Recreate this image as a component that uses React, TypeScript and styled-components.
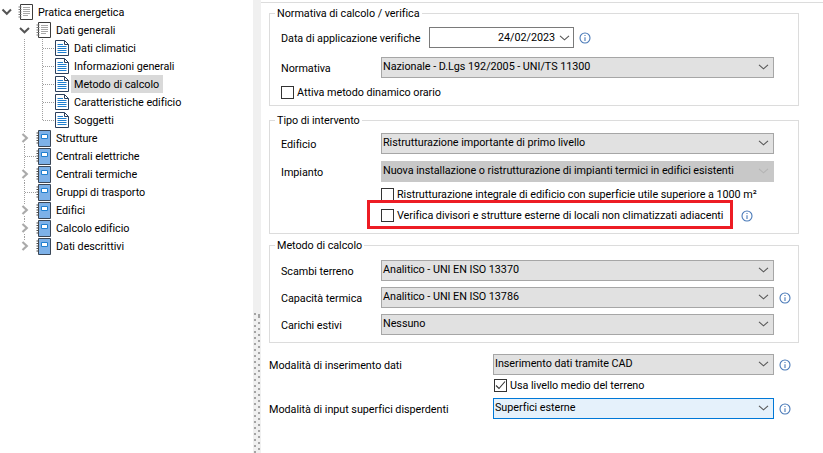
import React from 'react';
import styled, { createGlobalStyle } from 'styled-components';

const Global = createGlobalStyle`
  html, body { margin: 0; padding: 0; background: #fff; }
  body { font-family: Roboto, "Noto Sans", sans-serif; font-size: 10.8px; letter-spacing: -0.04px; color: #000; }
  * { box-sizing: border-box; }
`;

const Page = styled.div`
  width: 823px; height: 453px; display: flex; overflow: hidden; background: #fff;
`;

const TreePanel = styled.div`
  width: 253px; flex: none; padding-top: 3px; background: #fff;
`;

const Row = styled.div`
  height: 18px; display: flex; align-items: center; white-space: nowrap;
`;

const Cell = styled.span<{ $wide?: boolean }>`
  flex: none; width: ${p => (p.$wide ? 18 : 15)}px; height: 18px; display: block;
  svg { display: block; overflow: visible; }
`;

const IconBox = styled.span<{ $pad: number }>`
  flex: none; width: 23px; height: 18px; display: flex; align-items: center; padding-left: ${p => p.$pad}px;
`;

const Label = styled.span<{ $selected?: boolean }>`
  height: 18px; line-height: 19px; margin-left: -3px; padding: 0 4px 0 3px;
  background: ${p => (p.$selected ? '#d9d9d9' : 'transparent')};
`;

const Splitter = styled.div`
  width: 8px; flex: none; background: #f0f0f0; display: flex; align-items: flex-end; gap: 2px; padding-left: 1px;
`;

const GripColumn = styled.div<{ $offset: number }>`
  width: 2px; height: 140px;
  background-image: repeating-linear-gradient(to bottom, #a4a4a4 0 2px, transparent 2px 6px);
  background-position: 0 ${p => p.$offset}px;
`;

const Content = styled.div`
  flex: 1; display: flex; flex-direction: column; padding: 2px 24px 0 8px; min-width: 0;
`;

const TopRule = styled.div`
  height: 1px; background: #dcdcdc; margin: 0 -24px 3px -8px; flex: none;
`;

const Group = styled.fieldset<{ $h: number; $gap: number }>`
  margin: 0 0 ${p => p.$gap}px; padding: 0 0 0 11px; height: ${p => p.$h}px; border: 1px solid #dcdcdc;
  display: block; min-width: 0; flex: none;
  legend { padding: 0 2px; margin-left: -6px; line-height: 16px; height: 14px; }
`;

const Line = styled.div<{ $top?: number }>`
  display: flex; align-items: center; height: 21px; margin-top: ${p => p.$top ?? 0}px;
`;

const FieldLabel = styled.span<{ $w: number }>`
  flex: none; width: ${p => p.$w}px; white-space: nowrap; padding-top: 1px;
`;

const SelectBox = styled.div<{ $state?: 'off' | 'focus'; $w?: number }>`
  flex: none; height: 21px; width: ${p => p.$w ?? 393}px; display: flex; align-items: center; justify-content: space-between;
  padding: 0 4px 1px 1px; white-space: nowrap; line-height: 14px;
  border: 1px solid ${p => (p.$state === 'off' ? '#c8c8c8' : p.$state === 'focus' ? '#0078d7' : '#a6a6a6')};
  background: ${p => (p.$state === 'off' ? '#c8c8c8' : p.$state === 'focus' ? '#e5f1fb' : '#e1e1e1')};
`;

const DateBox = styled.div`
  flex: none; width: 145px; height: 21px; margin-left: 48px; border: 1px solid #7a7a7a; background: #fff;
  display: flex; align-items: center; justify-content: flex-end; gap: 4px; padding: 0 3px 0 0;
`;

const CheckRow = styled.div<{ $left: number; $top: number }>`
  display: flex; align-items: center; height: 13px; margin-left: ${p => p.$left}px; margin-top: ${p => p.$top}px; gap: 3px; white-space: nowrap;
`;

const CheckText = styled.span<{ $w?: number }>`
  flex: none; width: ${p => (p.$w ? `${p.$w}px` : 'auto')};
`;

const Box = styled.span`
  flex: none; width: 13px; height: 13px; border: 1px solid #333; background: #fff; display: block;
  svg { display: block; }
`;

const InfoSlot = styled.span<{ $left?: number }>`
  flex: none; margin-left: ${p => p.$left ?? 5}px; display: block; height: 12px;
  svg { display: block; }
`;

const Highlighted = styled.div`
  position: relative; height: 0;
`;

const RedFrame = styled.div`
  position: absolute; left: 86px; top: -22px; width: 366px; height: 29px; border: 3px solid #ed1c24; pointer-events: none;
`;

const Chevron = ({ light }: { light?: boolean }) => (
  <svg width="11" height="6" viewBox="0 0 11 6" fill="none">
    <path d="M1 .8 5.5 4.8 10 .8" stroke={light ? '#b4b4b4' : '#555'} strokeWidth="1.1" />
  </svg>
);

const Info = () => (
  <svg width="12" height="12" viewBox="0 0 12 12" fill="none">
    <circle cx="6" cy="6" r="5" stroke="#4a7ab8" strokeWidth="1.1" />
    <path d="M6 5.2V9M6 3V4.1" stroke="#4a7ab8" strokeWidth="1.1" />
  </svg>
);

const Expander = () => (
  <svg width="15" height="18" viewBox="0 0 15 18" fill="none">
    <path d="M2.5 6.5 6.8 10.8 11 6.5" stroke="#555" strokeWidth="2" />
  </svg>
);

const dots = { stroke: '#a0a0a0', strokeWidth: 1, strokeDasharray: '1 1' };

const Fold = ({ open, last }: { open: boolean; last?: boolean }) => (
  <svg width="18" height="18" viewBox="0 0 18 18" fill="none">
    {open ? (
      <path d="M5 7 9.5 11.3 14 7" stroke="#555" strokeWidth="2" />
    ) : (
      <>
        <path d={last ? 'M9.5 0V3' : 'M9.5 0V3M9.5 15V18'} {...dots} />
        <path d="M7.5 5 11.8 9 7.5 13" stroke="#aaa" strokeWidth="2.2" />
      </>
    )}
  </svg>
);

const Guide = ({ kind }: { kind: 'vert' | 'tee' | 'elbow' }) => (
  <svg width="18" height="18" viewBox="0 0 18 18" fill="none">
    {kind === 'vert' && <path d="M9.5 0V18" {...dots} />}
    {kind === 'tee' && <path d="M9.5 0V18M10 9.5H21" {...dots} />}
    {kind === 'elbow' && <path d="M9.5 0V9.5M10 9.5H21" {...dots} />}
  </svg>
);

const DocIcon = () => (
  <svg width="15" height="16" viewBox="0 0 15 16" fill="none">
    <path d="M2.5.5H14.5V15.5H2.5Z" fill="#fff" stroke="#3c3c3c" />
    <path d="M.5 3H3.5M.5 5.5H3.5M.5 8H3.5M.5 10.5H3.5M.5 13H3.5" stroke="#777" />
    <path d="M5 3.5H12M5 5.5H12M5 7.5H12M5 9.5H12M5 11.5H10" stroke="#a8a8a8" />
  </svg>
);

const PageIcon = () => (
  <svg width="14" height="16" viewBox="0 0 14 16" fill="none">
    <path d="M.5.5H9.5L13.5 4.5V15.5H.5Z" fill="#fff" stroke="#2b3f5c" />
    <path d="M9.5.5V4.5H13.5" stroke="#2b3f5c" />
    <path d="M2.5 4.5H8M2.5 6.5H11.5M2.5 8.5H11.5M2.5 10.5H11.5M2.5 12.5H11.5" stroke="#1f7fd0" />
  </svg>
);

const FolderIcon = () => (
  <svg width="15" height="17" viewBox="0 0 15 17" fill="none">
    <path d="M2.5.5H14.5V16.5H2.5Z" fill="#7db1e8" stroke="#3a4656" />
    <path d="M.5 3H3M.5 5.5H3M.5 8H3M.5 10.5H3M.5 13H3" stroke="#4a4a4a" />
    <path d="M5.5 4.5H11.5V8.5H5.5Z" fill="#fff" stroke="#1f7fd0" />
  </svg>
);

type Kind = 'doc' | 'page' | 'folder';
type G = 'vert' | 'tee' | 'elbow';
const tree: { text: string; icon: Kind; guides: G[]; fold?: 'open' | 'closed'; top?: boolean; selected?: boolean; last?: boolean }[] = [
  { text: 'Pratica energetica', icon: 'doc', guides: [], top: true },
  { text: 'Dati generali', icon: 'doc', guides: [], fold: 'open' },
  { text: 'Dati climatici', icon: 'page', guides: ['vert', 'tee'] },
  { text: 'Informazioni generali', icon: 'page', guides: ['vert', 'tee'] },
  { text: 'Metodo di calcolo', icon: 'page', guides: ['vert', 'tee'], selected: true },
  { text: 'Caratteristiche edificio', icon: 'page', guides: ['vert', 'tee'] },
  { text: 'Soggetti', icon: 'page', guides: ['vert', 'elbow'] },
  { text: 'Strutture', icon: 'folder', guides: [], fold: 'closed' },
  { text: 'Centrali elettriche', icon: 'folder', guides: ['tee'] },
  { text: 'Centrali termiche', icon: 'folder', guides: [], fold: 'closed' },
  { text: 'Gruppi di trasporto', icon: 'folder', guides: ['tee'] },
  { text: 'Edifici', icon: 'folder', guides: [], fold: 'closed' },
  { text: 'Calcolo edificio', icon: 'folder', guides: [], fold: 'closed' },
  { text: 'Dati descrittivi', icon: 'folder', guides: [], fold: 'closed', last: true },
];

const icons = { doc: <DocIcon />, page: <PageIcon />, folder: <FolderIcon /> };

const Check = ({ on }: { on?: boolean }) => (
  <Box>
    {on && (
      <svg width="11" height="11" viewBox="0 0 11 11" fill="none">
        <path d="M1 5.5 4 8.5 10 1.5" stroke="#333" strokeWidth="1.1" />
      </svg>
    )}
  </Box>
);

const Sel = ({ text, state, w }: { text: string; state?: 'off' | 'focus'; w?: number }) => (
  <SelectBox $state={state} $w={w}>
    <span>{text}</span>
    <Chevron light={state === 'off'} />
  </SelectBox>
);

export default function App() {
  return (
    <Page>
      <Global />
      <TreePanel>
        {tree.map(n => (
          <Row key={n.text}>
            <Cell>{n.top && <Expander />}</Cell>
            {n.fold && <Cell $wide><Fold open={n.fold === 'open'} last={n.last} /></Cell>}
            {n.guides.map((g, i) => <Cell $wide key={i}><Guide kind={g} /></Cell>)}
            <IconBox $pad={n.icon === 'page' ? 4 : 3}>{icons[n.icon]}</IconBox>
            <Label $selected={n.selected}>{n.text}</Label>
          </Row>
        ))}
      </TreePanel>
      <Splitter>
        <GripColumn $offset={0} />
        <GripColumn $offset={3} />
      </Splitter>
      <Content>
        <TopRule />
        <Group $h={100} $gap={7}>
          <legend>Normativa di calcolo / verifica</legend>
          <Line $top={7}>
            <FieldLabel $w={100}>Data di applicazione verifiche</FieldLabel>
            <DateBox>24/02/2023 <Chevron /></DateBox>
            <InfoSlot><Info /></InfoSlot>
          </Line>
          <Line $top={9}>
            <FieldLabel $w={100}>Normativa</FieldLabel>
            <Sel text="Nazionale - D.Lgs 192/2005 - UNI/TS 11300" />
          </Line>
          <CheckRow $left={0} $top={8}><Check /><CheckText>Attiva metodo dinamico orario</CheckText></CheckRow>
        </Group>
        <Group $h={121} $gap={4}>
          <legend>Tipo di intervento</legend>
          <Line $top={6}>
            <FieldLabel $w={100}>Edificio</FieldLabel>
            <Sel text="Ristrutturazione importante di primo livello" />
          </Line>
          <Line $top={7}>
            <FieldLabel $w={100}>Impianto</FieldLabel>
            <Sel text="Nuova installazione o ristrutturazione di impianti termici in edifici esistenti" state="off" />
          </Line>
          <CheckRow $left={100} $top={6}><Check /><CheckText>Ristrutturazione integrale di edificio con superficie utile superiore a 1000 m²</CheckText></CheckRow>
          <CheckRow $left={100} $top={8}>
            <Check />
            <CheckText $w={338}>Verifica divisori e strutture esterne di locali non climatizzati adiacenti</CheckText>
            <InfoSlot $left={3}><Info /></InfoSlot>
          </CheckRow>
          <Highlighted><RedFrame /></Highlighted>
        </Group>
        <Group $h={105} $gap={11}>
          <legend>Metodo di calcolo</legend>
          <Line $top={8}>
            <FieldLabel $w={100}>Scambi terreno</FieldLabel>
            <Sel text="Analitico - UNI EN ISO 13370" />
          </Line>
          <Line $top={6}>
            <FieldLabel $w={100}>Capacità termica</FieldLabel>
            <Sel text="Analitico - UNI EN ISO 13786" />
            <InfoSlot><Info /></InfoSlot>
          </Line>
          <Line $top={6}>
            <FieldLabel $w={100}>Carichi estivi</FieldLabel>
            <Sel text="Nessuno" />
          </Line>
        </Group>
        <Line>
          <FieldLabel $w={224}>Modalità di inserimento dati</FieldLabel>
          <Sel text="Inserimento dati tramite CAD" w={281} />
          <InfoSlot><Info /></InfoSlot>
        </Line>
        <CheckRow $left={225} $top={4}><Check on /><CheckText>Usa livello medio del terreno</CheckText></CheckRow>
        <Line $top={6}>
          <FieldLabel $w={224}>Modalità di input superfici disperdenti</FieldLabel>
          <Sel text="Superfici esterne" w={281} state="focus" />
          <InfoSlot><Info /></InfoSlot>
        </Line>
      </Content>
    </Page>
  );
}
